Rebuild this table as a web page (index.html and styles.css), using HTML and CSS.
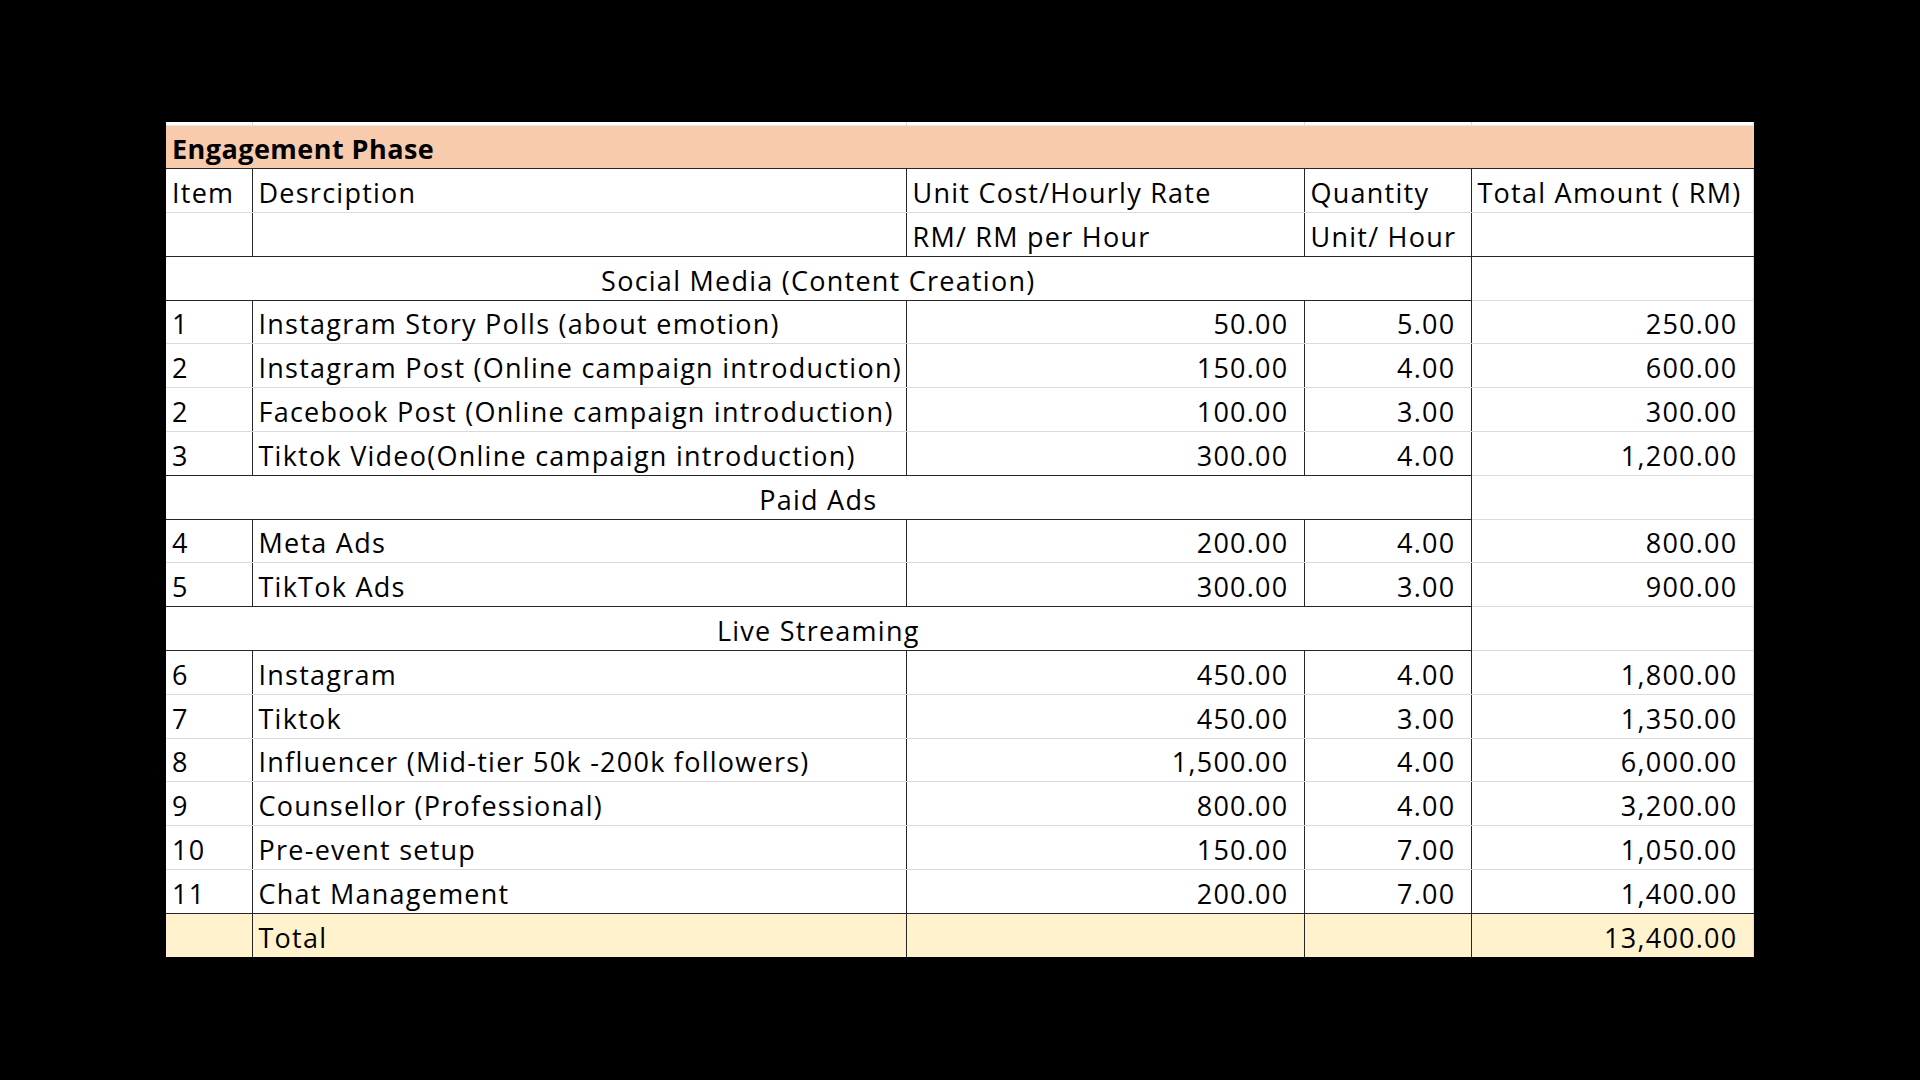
FILE: index.html
```html
<!DOCTYPE html>
<html lang="en">
<head>
<meta charset="utf-8">
<title>Engagement Phase</title>
<link rel="stylesheet" href="styles.css">
</head>
<body>
<main class="stage">
<table class="sheet">
  <colgroup>
    <col class="c-item"><col class="c-desc"><col class="c-unit"><col class="c-qty"><col class="c-total">
  </colgroup>
  <tbody>
    <tr class="strip"><td class="v"></td><td class="v"></td><td class="v"></td><td class="v"></td><td></td></tr>
    <tr class="phase"><td colspan="5">Engagement Phase</td></tr>
    <tr class="head1">
      <td class="v">Item</td><td class="v">Desrciption</td><td class="v">Unit Cost/Hourly Rate</td><td class="v">Quantity</td><td>Total Amount ( RM)</td>
    </tr>
    <tr class="head2 end">
      <td class="v"></td><td class="v"></td><td class="v">RM/ RM per Hour</td><td class="v">Unit/ Hour</td><td class="dk"></td>
    </tr>
    <tr class="section"><td colspan="4" class="v">Social Media (Content Creation)</td><td></td></tr>
    <tr><td class="v">1</td><td class="v">Instagram Story Polls (about emotion)</td><td class="v num">50.00</td><td class="v num">5.00</td><td class="num">250.00</td></tr>
    <tr><td class="v">2</td><td class="v">Instagram Post (Online campaign introduction)</td><td class="v num">150.00</td><td class="v num">4.00</td><td class="num">600.00</td></tr>
    <tr><td class="v">2</td><td class="v">Facebook Post (Online campaign introduction)</td><td class="v num">100.00</td><td class="v num">3.00</td><td class="num">300.00</td></tr>
    <tr class="end"><td class="v">3</td><td class="v">Tiktok Video(Online campaign introduction)</td><td class="v num">300.00</td><td class="v num">4.00</td><td class="num">1,200.00</td></tr>
    <tr class="section"><td colspan="4" class="v">Paid Ads</td><td></td></tr>
    <tr><td class="v">4</td><td class="v">Meta Ads</td><td class="v num">200.00</td><td class="v num">4.00</td><td class="num">800.00</td></tr>
    <tr class="end"><td class="v">5</td><td class="v">TikTok Ads</td><td class="v num">300.00</td><td class="v num">3.00</td><td class="num">900.00</td></tr>
    <tr class="section"><td colspan="4" class="v">Live Streaming</td><td></td></tr>
    <tr><td class="v">6</td><td class="v">Instagram</td><td class="v num">450.00</td><td class="v num">4.00</td><td class="num">1,800.00</td></tr>
    <tr><td class="v">7</td><td class="v">Tiktok</td><td class="v num">450.00</td><td class="v num">3.00</td><td class="num">1,350.00</td></tr>
    <tr><td class="v">8</td><td class="v">Influencer (Mid-tier 50k -200k followers)</td><td class="v num">1,500.00</td><td class="v num">4.00</td><td class="num">6,000.00</td></tr>
    <tr><td class="v">9</td><td class="v">Counsellor (Professional)</td><td class="v num">800.00</td><td class="v num">4.00</td><td class="num">3,200.00</td></tr>
    <tr><td class="v">10</td><td class="v">Pre-event setup</td><td class="v num">150.00</td><td class="v num">7.00</td><td class="num">1,050.00</td></tr>
    <tr class="end last"><td class="v">11</td><td class="v">Chat Management</td><td class="v num">200.00</td><td class="v num">7.00</td><td class="num dk">1,400.00</td></tr>
    <tr class="total"><td class="v"></td><td class="v">Total</td><td class="v"></td><td class="v"></td><td class="num">13,400.00</td></tr>
  </tbody>
</table>
</main>
</body>
</html>
```
FILE: styles.css
```css
html, body {
  margin: 0;
  padding: 0;
  background: #000;
}
.stage {
  padding: 122px 0 0 166px;
}
.sheet {
  border-collapse: collapse;
  table-layout: fixed;
  width: 1587px;
  background: #fff;
  font-family: "Open Sans", Lato, sans-serif;
  font-size: 27px;
  line-height: 27px;
  letter-spacing: 1.25px;
  color: #000;
}
.c-item { width: 86px; }
.c-desc { width: 654px; }
.c-unit { width: 398px; }
.c-qty { width: 167px; }
.c-total { width: 282px; }

.sheet tr { height: 43.8px; }
.sheet td {
  padding: 0 6px 6px 6px;
  vertical-align: bottom;
  white-space: nowrap;
  overflow: hidden;
  border-bottom: 1px solid #dadada;
  border-right: 1px solid #dadada;
}
.sheet td.v { border-right: 1px solid #262626; }
.sheet td.num { text-align: right; padding-right: 15px; }

.sheet tr.strip { height: 3px; }
.sheet tr.strip td {
  padding: 0;
  height: 2px;
  font-size: 0;
  line-height: 0;
  border-right: 1px solid #dadada;
  border-bottom: 1px solid #e6e6e6;
}

.sheet tr.phase td {
  background: #f8cbad;
  font-weight: 700;
  letter-spacing: 0.45px;
  border-bottom: 1px solid #262626;
}

.sheet tr.end td { border-bottom: 1px solid #262626; }
.sheet tr.end td:last-child { border-bottom-color: #dadada; }
.sheet tr.head2 td:last-child,
.sheet tr.last td:last-child { border-bottom-color: #262626; }

.sheet tr.section td { border-bottom: 1px solid #dadada; }
.sheet tr.section td[colspan] {
  text-align: center;
  border-bottom: 1px solid #262626;
}

.sheet tr.total td {
  background: #fff2cc;
  border-bottom: none;
}
```
